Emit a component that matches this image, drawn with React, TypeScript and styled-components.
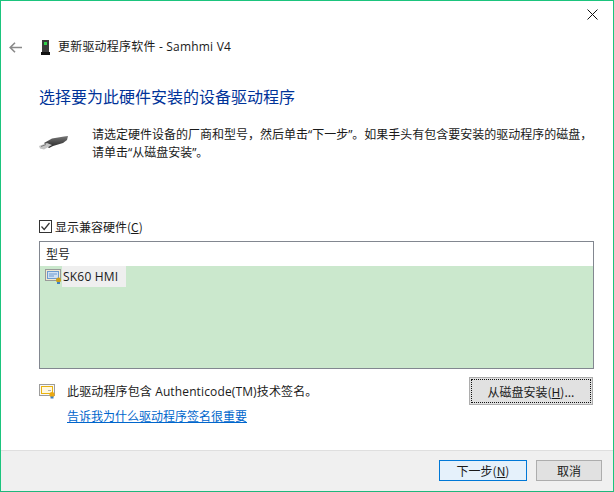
import React from 'react'
import styled, {createGlobalStyle} from 'styled-components'

const cjk = `"Noto Sans CJK SC", "Liberation Sans", sans-serif`
const latin = `"Open Sans", "Noto Sans CJK SC", sans-serif`

const GlobalStyle = createGlobalStyle`
  html, body {
    margin: 0;
    padding: 0;
    background: #fff;
  }
`

const Window = styled.div`
  width: 614px;
  height: 492px;
  box-sizing: border-box;
  border: 1px solid #1bc47d;
  border-bottom-color: #1fb67c;
  display: flex;
  flex-direction: column;
  background: #fff;
  font-family: ${cjk};
  font-size: 12px;
  color: #1a1a1a;
`

const CloseRow = styled.div`
  height: 31px;
  display: flex;
  justify-content: flex-end;
  padding: 8px 15px 0 0;
  box-sizing: border-box;
`

const NavRow = styled.div`
  height: 30px;
  margin-top: 0;
  display: flex;
  align-items: center;
`

const BackSlot = styled.div`
  width: 40px;
  padding-left: 8px;
  box-sizing: border-box;
  display: flex;
`

const WizardTitle = styled.span`
  margin-left: 8px;
  font-family: ${latin};
  font-size: 12px;
  line-height: 16px;
  letter-spacing: 0.2px;
`

const Content = styled.div`
  flex: 1;
  padding: 0 19px 0 38px;
  display: flex;
  flex-direction: column;
`

const Heading = styled.h1`
  margin: 22px 0 0;
  font-size: 16px;
  line-height: 24px;
  font-weight: 400;
  color: #003399;
  letter-spacing: 0;
`

const Intro = styled.div`
  margin-top: 15px;
  display: flex;
  height: 83px;
`

const IntroIcon = styled.div`
  width: 53px;
  padding-top: 12px;
  box-sizing: border-box;
  flex: none;
`

const IntroText = styled.p`
  margin: 0;
  font-family: ${latin};
  font-size: 12px;
  line-height: 18px;
  width: 502px;
  padding-top: 3px;
`

const CheckRow = styled.label`
  margin-top: 12px;
  display: flex;
  align-items: center;
  height: 16px;
  gap: 3px;
`

const CheckBox = styled.span`
  width: 11px;
  height: 11px;
  border: 1px solid #333;
  display: flex;
  align-items: center;
  justify-content: center;
  background: #fff;
`

const ListBox = styled.div`
  margin-top: 7px;
  width: 555px;
  height: 128px;
  box-sizing: border-box;
  border: 1px solid #828790;
  background: #cbe8cd;
  display: flex;
  flex-direction: column;
`

const ListHeader = styled.div`
  height: 24px;
  flex: none;
  background: #fff;
  padding-left: 6px;
  line-height: 24px;
  font-size: 12px;
`

const ListRow = styled.div`
  height: 21px;
  display: flex;
  align-items: center;
  padding-left: 5px;
`

const RowLabel = styled.span`
  height: 21px;
  line-height: 21px;
  padding: 0 8px 0 1px;
  margin-left: 0;
  background: #efefef;
  font-family: ${latin};
  font-size: 12px;
  letter-spacing: 0.2px;
`

const SignedArea = styled.div`
  margin-top: 8px;
  width: 554px;
  height: 70px;
  display: flex;
  justify-content: space-between;
  align-items: flex-start;
`

const SignedInfo = styled.div`
  display: flex;
  flex-direction: column;
  gap: 7px;
  padding-top: 5px;
`

const SignedLine = styled.div`
  display: flex;
  align-items: center;
  gap: 11px;
  height: 18px;
  font-size: 12px;
`

const Mixed = styled.span`
  font-family: ${latin};
  letter-spacing: 0.13px;
`

const HelpLink = styled.a`
  margin-left: 28px;
  color: #0066cc;
  text-decoration: underline;
  font-size: 12px;
  line-height: 18px;
`

const Button = styled.button<{$width: number; $tall?: boolean; $primary?: boolean}>`
  width: ${p => p.$width}px;
  height: ${p => (p.$tall ? 28 : 21)}px;
  box-sizing: border-box;
  margin: 0;
  padding: 0;
  background: ${p => (p.$primary ? '#e5f1fb' : '#e1e1e1')};
  border: ${p => (p.$primary ? '1px solid #0078d7' : '1px solid #adadad')};
  font-family: ${cjk};
  font-size: 12px;
  color: #1a1a1a;
  position: relative;
`

const FocusRing = styled.span`
  position: absolute;
  inset: 1px;
  border: 1px dotted #111;
  pointer-events: none;
`

const Footer = styled.div`
  height: 41px;
  flex: none;
  background: #f0f0f0;
  border-top: 1px solid #dfdfdf;
  display: flex;
  justify-content: flex-end;
  align-items: flex-start;
  gap: 9px;
  padding: 9px 11px 0 0;
  box-sizing: border-box;
`

const Under = styled.span`
  text-decoration: underline;
`

const ListCertIcon: React.FC = () => (
  <svg width="17" height="15" viewBox="0 0 17 15" style={{flex: 'none'}}>
    <rect x="0.5" y="0.5" width="15" height="11" fill="#f0e9d0" stroke="#9a9a9a" />
    <rect x="2.5" y="2.5" width="11" height="7" fill="#cfe0f2" stroke="#6b9bd0" />
    <path d="M4 5h8M4 7h5" stroke="#6b9bd0" />
    <circle cx="13.5" cy="11" r="2.5" fill="#c9a020" />
    <rect x="12" y="13" width="3" height="2" fill="#3f7fc4" />
  </svg>
)

const SignCertIcon: React.FC = () => (
  <svg width="17" height="15" viewBox="0 0 17 15" style={{flex: 'none'}}>
    <rect x="0.5" y="0.5" width="15" height="11" fill="#f7f7f7" stroke="#9c9c9c" />
    <rect x="2.5" y="2.5" width="11" height="7" fill="#fff8df" stroke="#e9b210" />
    <path d="M9 6.5h3" stroke="#b0b0b0" />
    <circle cx="13" cy="10.5" r="2.6" fill="#eba913" />
    <rect x="11.5" y="12.5" width="3" height="2" fill="#3f7fc4" />
  </svg>
)

const App: React.FC = () => (
  <Window>
    <GlobalStyle />
    <CloseRow>
      <svg width="11" height="11" viewBox="0 0 11 11">
        <path d="M0.5 0.5L10.5 10.5M10.5 0.5L0.5 10.5" stroke="#111" strokeWidth="1" fill="none" />
      </svg>
    </CloseRow>
    <NavRow>
      <BackSlot>
        <svg width="13" height="11" viewBox="0 0 13 11">
          <path d="M6 0.7L1.2 5.5L6 10.3M1.2 5.5H13" stroke="#8a8a8a" strokeWidth="1.6" fill="none" />
        </svg>
      </BackSlot>
      <svg width="9" height="15" viewBox="0 0 9 15">
        <rect x="1" y="0" width="7" height="12" fill="#3a3a3a" />
        <rect x="3" y="2" width="3" height="3" fill="#2fd34a" />
        <rect x="0" y="12" width="9" height="3" fill="#111" />
      </svg>
      <WizardTitle>更新驱动程序软件 - Samhmi V4</WizardTitle>
    </NavRow>
    <Content>
      <Heading>选择要为此硬件安装的设备驱动程序</Heading>
      <Intro>
        <IntroIcon>
          <svg width="30" height="17" viewBox="0 0 30 17">
            <defs>
              <linearGradient id="plug" x1="0" y1="0" x2="0" y2="1">
                <stop offset="0" stopColor="#777" />
                <stop offset="1" stopColor="#222" />
              </linearGradient>
            </defs>
            <path d="M5 8L13 3.5L25 1.5L29 1L28 5L24 8L14 11L10 13Z" fill="url(#plug)" />
            <path d="M0 11L8 8L13 10L5 14.5L1 13.5Z" fill="#c4c4c4" />
            <path d="M2 11.5L7 9.5" stroke="#777" />
          </svg>
        </IntroIcon>
        <IntroText>
          请选定硬件设备的厂商和型号，然后单击“下一步”。如果手头有包含要安装的驱动程序的磁盘，请单击“从磁盘安装”。
        </IntroText>
      </Intro>
      <CheckRow>
        <CheckBox>
          <svg width="9" height="9" viewBox="0 0 9 9">
            <path d="M0.5 4.5L3.2 7.5L8.5 1" stroke="#333" strokeWidth="1.2" fill="none" />
          </svg>
        </CheckBox>
        <span>
          显示兼容硬件(<Under>C</Under>)
        </span>
      </CheckRow>
      <ListBox>
        <ListHeader>型号</ListHeader>
        <ListRow>
          <ListCertIcon />
          <RowLabel>SK60 HMI</RowLabel>
        </ListRow>
      </ListBox>
      <SignedArea>
        <SignedInfo>
          <SignedLine>
            <SignCertIcon />
            <Mixed>此驱动程序包含 Authenticode(TM)技术签名。</Mixed>
          </SignedLine>
          <HelpLink>告诉我为什么驱动程序签名很重要</HelpLink>
        </SignedInfo>
        <Button $width={124} $tall>
          <FocusRing />
          从磁盘安装(<Under>H</Under>)...
        </Button>
      </SignedArea>
    </Content>
    <Footer>
      <Button $width={88} $primary>
        下一步(<Under>N</Under>)
      </Button>
      <Button $width={66}>取消</Button>
    </Footer>
  </Window>
)

export default App
